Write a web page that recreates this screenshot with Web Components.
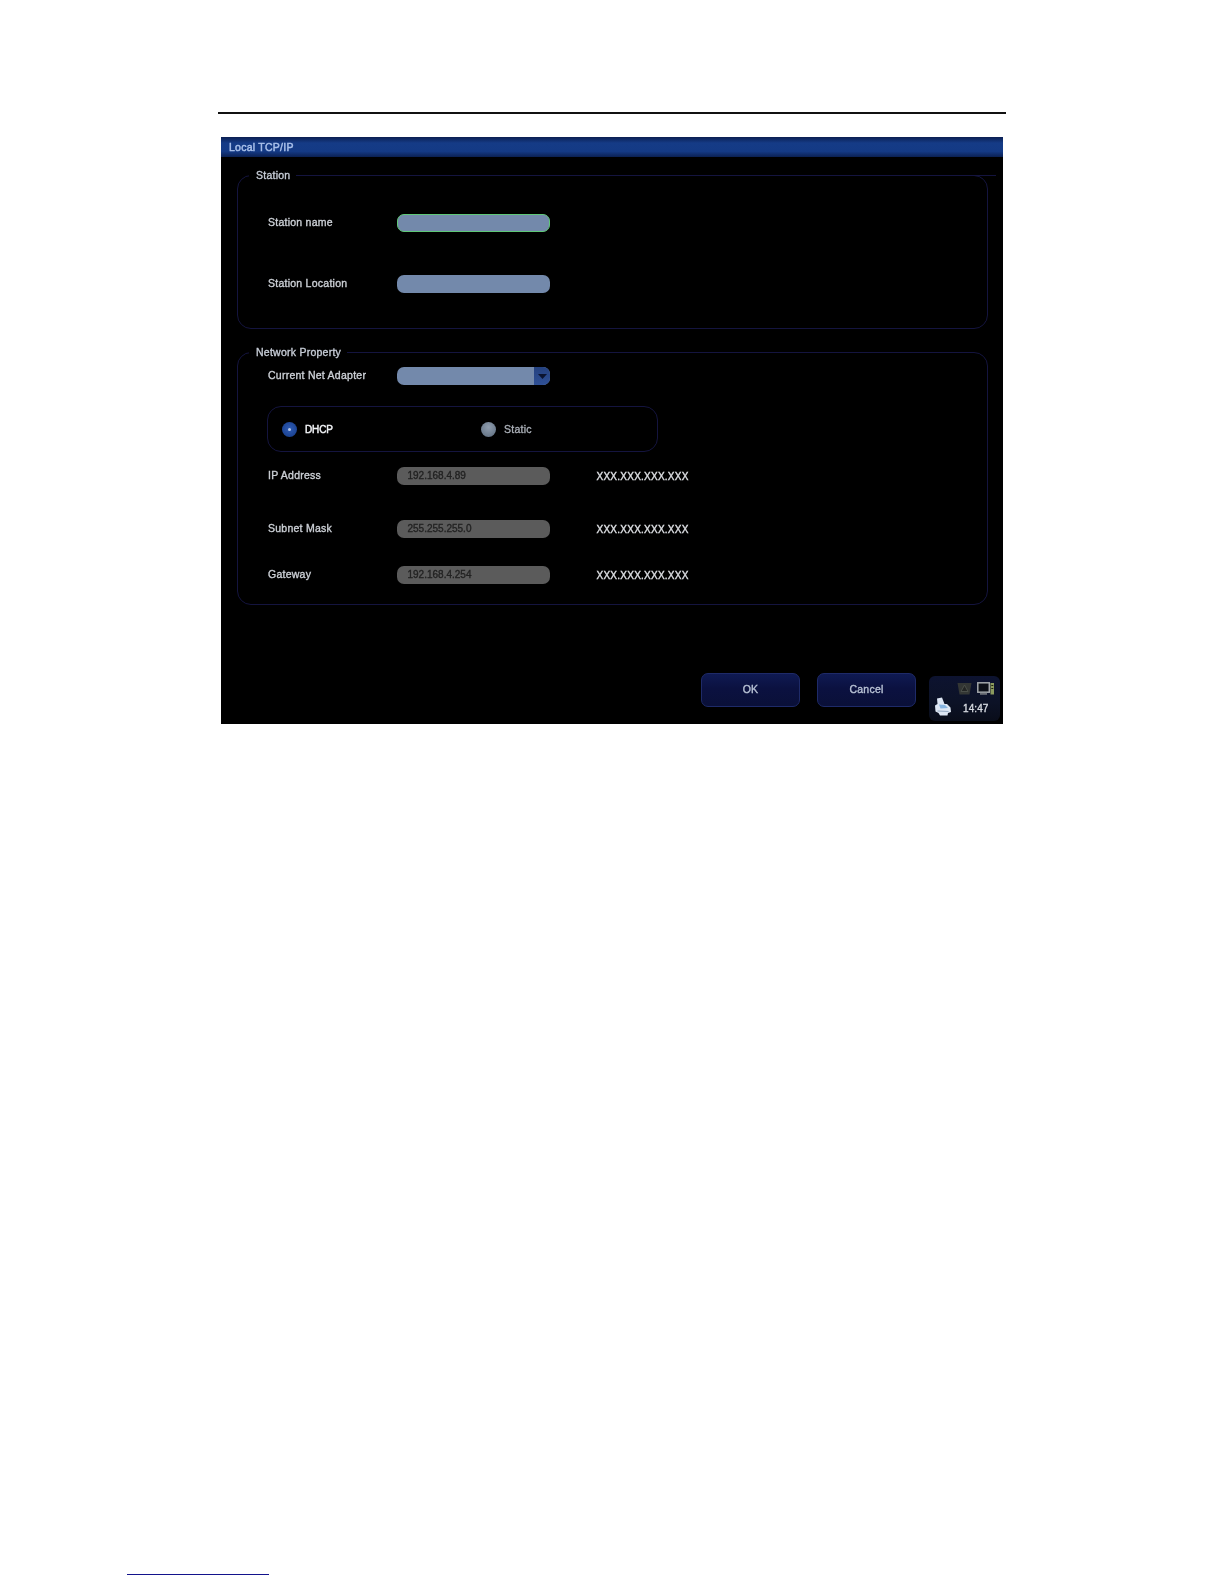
<!DOCTYPE html>
<html lang="en">
<head>
<meta charset="UTF-8">
<title>Local TCP/IP</title>
<style>
  html, body { margin: 0; background: #fff; }
  body { font-family: "Liberation Sans", Arial, sans-serif; }
</style>
</head>
<body>
<manual-page>
  <tcp-window heading="Local TCP/IP">
    <tcp-group legend="Station" spur style="height:154px;padding-top:38px">
      <tcp-row label="Station name"><tcp-input focused></tcp-input></tcp-row>
      <tcp-row label="Station Location" style="margin-top:43px"><tcp-input></tcp-input></tcp-row>
    </tcp-group>
    <tcp-group legend="Network Property" style="height:252.5px;padding-top:14px;margin-top:23px">
      <tcp-row label="Current Net Adapter"><tcp-select></tcp-select></tcp-row>
      <tcp-radios style="margin-top:21px">
        <tcp-radio checked>DHCP</tcp-radio>
        <tcp-radio>Static</tcp-radio>
      </tcp-radios>
      <tcp-row label="IP Address" hint="XXX.XXX.XXX.XXX" style="margin-top:15px"><tcp-input disabled value="192.168.4.89"></tcp-input></tcp-row>
      <tcp-row label="Subnet Mask" hint="XXX.XXX.XXX.XXX" style="margin-top:35px"><tcp-input disabled value="255.255.255.0"></tcp-input></tcp-row>
      <tcp-row label="Gateway" hint="XXX.XXX.XXX.XXX" style="margin-top:28px"><tcp-input disabled value="192.168.4.254"></tcp-input></tcp-row>
    </tcp-group>
    <tcp-footer>
      <tcp-button>OK</tcp-button>
      <tcp-button>Cancel</tcp-button>
      <tcp-tray time="14:47"></tcp-tray>
    </tcp-footer>
  </tcp-window>
</manual-page>

<script>
  // small helper, every element just sets its shadow html once
  function define(name, html, setup) {
    customElements.define(name, class extends HTMLElement {
      constructor() {
        super();
        this.attachShadow({ mode: 'open' }).innerHTML = html;
      }
      connectedCallback() {
        if (setup) setup(this, this.shadowRoot);
      }
    });
  }

  define('manual-page', `
    <style>
      :host { display: block; width: 1224px; height: 1584px; background: #fff; box-sizing: border-box; padding-top: 112px; overflow: hidden; }
      .rule { height: 1.5px; width: 788px; margin-left: 218px; background: #111; }
      .content { margin: 23.5px 0 0 221px; }
      .note { width: 142px; height: 1.2px; margin: 850px 0 0 127px; background: #13138c; }
    </style>
    <div class="rule"></div>
    <div class="content"><slot></slot></div>
    <div class="note"></div>`);

  define('tcp-window', `
    <style>
      :host { display: block; width: 782px; height: 587px; background: #000; color: #ccd0d6; font: normal 10.5px "Liberation Sans", Arial, sans-serif; letter-spacing: .25px; -webkit-text-stroke: .35px currentColor; filter: blur(.3px); }
      .title { height: 20px; line-height: 20px; padding-left: 8px; color: #a9c0ea; -webkit-text-stroke: .45px currentColor;
               background: linear-gradient(#0b1f52, #153b86 30%, #143a85 72%, #0b2052); }
      .body { padding: 18px 0 0 16px; }
    </style>
    <div class="title"></div>
    <div class="body"><slot></slot></div>`,
    (el, root) => { root.querySelector('.title').textContent = el.getAttribute('heading'); });

  define('tcp-group', `
    <style>
      :host { display: block; position: relative; width: 751px; box-sizing: border-box; border: 1px solid #14143f; border-radius: 14px; }
      .legend { position: absolute; left: 11px; top: -8px; padding: 0 6px 0 7px; line-height: 14px; background: #000; color: #c6ccd6; }
      .spur { position: absolute; right: -9px; top: -1px; width: 24px; height: 1px; background: #14143f; }
    </style>
    <div class="legend"></div>
    <slot></slot>`,
    (el, root) => {
      root.querySelector('.legend').textContent = el.getAttribute('legend');
      if (el.hasAttribute('spur')) root.querySelector('.legend').insertAdjacentHTML('afterend', '<div class="spur"></div>');
    });

  define('tcp-row', `
    <style>
      :host { display: grid; grid-template-columns: 129px 153px auto; align-items: center; height: 18px; padding-left: 30px; }
      .label { margin-top: -2px; }
      .hint { margin: 0 0 0 46.5px; color: #dfe1e5; font-size: 10px; }
    </style>
    <span class="label"></span>
    <slot></slot>
    <span class="hint"></span>`,
    (el, root) => {
      root.querySelector('.label').textContent = el.getAttribute('label');
      root.querySelector('.hint').textContent = el.getAttribute('hint') || '';
    });

  define('tcp-input', `
    <style>
      :host { display: block; height: 18px; box-sizing: border-box; border-radius: 7px; background: #7389ab; padding-left: 10.5px; line-height: 17px; color: #222; font-size: 10px; letter-spacing: 0; }
      :host([focused]) { border: 1px solid #5fc877; }
      :host([disabled]) { background: #5b5b5b; }
    </style>
    <span></span>`,
    (el, root) => { root.querySelector('span').textContent = el.getAttribute('value') || ''; });

  define('tcp-select', `
    <style>
      :host { display: flex; height: 18px; border-radius: 7px; overflow: hidden; background: #7389ab; }
      .fill { flex: 1; }
      .drop { width: 16px; background: linear-gradient(#24417f, #2f5096); display: flex; align-items: center; justify-content: center; }
    </style>
    <div class="fill"></div>
    <div class="drop"><svg width="9" height="5" viewBox="0 0 9 5"><path d="M0 0h9L4.5 5z" fill="#0b1430"/></svg></div>`);

  define('tcp-radios', `
    <style>
      :host { display: flex; align-items: center; width: 391px; height: 46px; box-sizing: border-box; margin-left: 29px; padding-left: 14px; border: 1px solid #14143f; border-radius: 14px; }
      ::slotted(tcp-radio) { flex: none; width: 199px; }
    </style>
    <slot></slot>`);

  define('tcp-radio', `
    <style>
      :host { display: flex; align-items: center; gap: 8px; color: #a9aeb6; }
      :host([checked]) { font-size: 10px; letter-spacing: -.1px; color: #f0f2f5; -webkit-text-stroke: .45px currentColor; }
      .dot { width: 15px; height: 15px; border-radius: 50%; background: radial-gradient(circle at 50% 35%, #8f9dae, #6b7a8c 70%, #5a6878); display: flex; align-items: center; justify-content: center; }
      :host([checked]) .dot { background: radial-gradient(circle at 50% 45%, #2f5cb5, #1d4595 65%, #143472); }
      :host([checked]) .dot::after { content: ""; width: 3px; height: 3px; border-radius: 50%; background: #b7c8e8; }
    </style>
    <span class="dot"></span><slot></slot>`);

  define('tcp-footer', `
    <style>
      :host { display: flex; align-items: flex-start; margin: 68.5px 0 0 464px; gap: 17px; }
      ::slotted(tcp-tray) { margin: 3px 0 0 -4px; }
    </style>
    <slot></slot>`);

  define('tcp-button', `
    <style>
      :host { display: flex; align-items: center; justify-content: center; width: 99px; height: 34px; box-sizing: border-box; padding-bottom: 2px; border: 1px solid #1e2a68; border-radius: 7px; background: linear-gradient(#0f1a52, #0b1140 45%, #0a1038); color: #b9c3d6; }
    </style>
    <slot></slot>`);

  define('tcp-tray', `
    <style>
      :host { display: block; width: 71px; height: 45px; box-sizing: border-box; padding: 6px 6px 0 5px; border-radius: 6px; background: linear-gradient(#0d1330, #0c1226 60%, #090d1a); color: #d6dae0; font-size: 10px; letter-spacing: .1px; }
      .top { display: flex; justify-content: flex-end; gap: 5px; height: 13px; }
      .bottom { display: flex; align-items: center; margin-top: 2px; }
      .time { margin: 3px 0 0 11px; }
    </style>
    <div class="top">
      <svg width="15" height="13" viewBox="0 0 15 13"><path d="M.5 1h14l-2 11.5H2.500z" fill="#333634"/><path d="M7.500 3l3.500 6.500H4z" fill="#232524" stroke="#4a4e49"/></svg>
      <svg width="17" height="13" viewBox="0 0 17 13"><rect x=".8" y=".8" width="11.500" height="9.400" fill="#0d1018" stroke="#a4a8ac" stroke-width="1.500"/><rect x="3" y="10.800" width="7" height="2" fill="#6a6e74"/><rect x="13.500" y="1" width="3.500" height="11.500" fill="#8b9a5e"/><rect x="14.300" y="3" width="2" height="1" fill="#20240f"/><rect x="14.300" y="6" width="2" height="1" fill="#20240f"/></svg>
    </div>
    <div class="bottom">
      <svg width="18" height="19" viewBox="0 0 18 19"><path d="M3 1.500L8 .5l2.500 6.500H13l3.500 3.500.500 4.500-3 1-.5 2.500H6L4.500 16 1.500 14.500 1 8.500 3.500 7z" fill="#dde6f3"/><path d="M5 7.500l6 .5 3 3-7.500.5z" fill="#86b4e0"/><path d="M3.500 14l11 .5" stroke="#93a8c2"/></svg>
      <span class="time"></span>
    </div>`,
    (el, root) => { root.querySelector('.time').textContent = el.getAttribute('time'); });
</script>
</body>
</html>
